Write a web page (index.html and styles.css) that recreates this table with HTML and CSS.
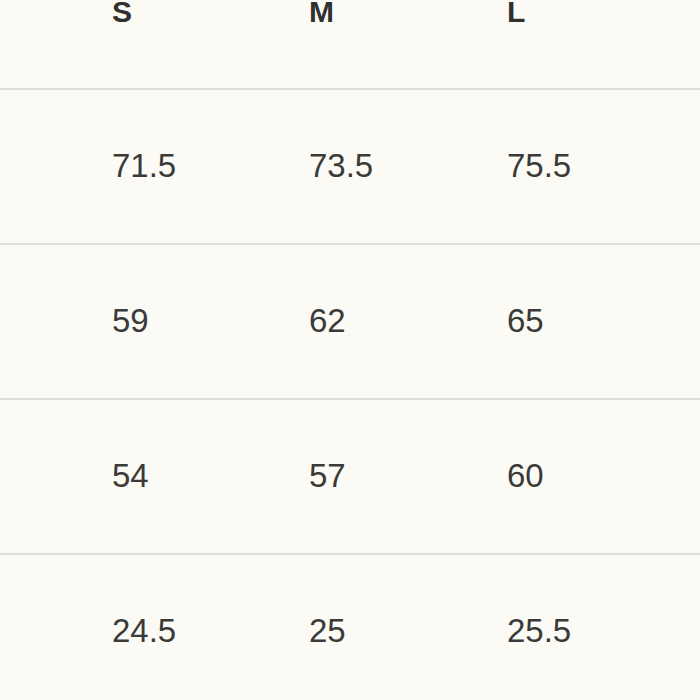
FILE: index.html
```html
<!DOCTYPE html>
<html>
<head>
<meta charset="utf-8">
<link rel="stylesheet" href="styles.css">
</head>
<body>
<div class="table">
  <div class="row head">
    <div class="cell">S</div><div class="cell">M</div><div class="cell">L</div>
  </div>
  <div class="row">
    <div class="cell">71.5</div><div class="cell">73.5</div><div class="cell">75.5</div>
  </div>
  <div class="row">
    <div class="cell">59</div><div class="cell">62</div><div class="cell">65</div>
  </div>
  <div class="row">
    <div class="cell">54</div><div class="cell">57</div><div class="cell">60</div>
  </div>
  <div class="row">
    <div class="cell">24.5</div><div class="cell">25</div><div class="cell">25.5</div>
  </div>
</div>
</body>
</html>
```
FILE: styles.css
```css
html, body {
  margin: 0;
  background: #fbfaf5;
}
body {
  font-family: "Liberation Sans", Arial, sans-serif;
  color: #3a3a38;
  overflow: hidden;
}
.table {
  display: flex;
  flex-direction: column;
}
.row {
  display: grid;
  grid-template-columns: 197px 198px 197px;
  padding-left: 112px;
  height: 153px;
  box-sizing: content-box;
  border-bottom: 2px solid #dfddd7;
  font-size: 33px;
  line-height: 33px;
  align-items: start;
  overflow: hidden;
}
.row .cell {
  padding-top: 59px;
}
.row.head {
  height: 88px;
  font-size: 30px;
  line-height: 30px;
  font-weight: bold;
  color: #30302e;
}
.row.head .cell {
  padding-top: 0;
  margin-top: -3px;
}
```
